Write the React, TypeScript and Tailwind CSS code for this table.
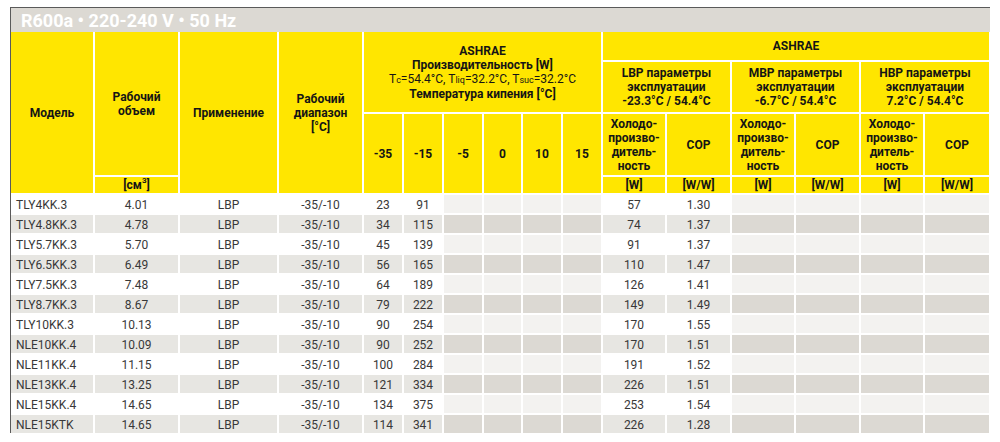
import React from 'react';

const rows = [
  ['TLY4KK.3', '4.01', '23', '91', '57', '1.30'],
  ['TLY4.8KK.3', '4.78', '34', '115', '74', '1.37'],
  ['TLY5.7KK.3', '5.70', '45', '139', '91', '1.37'],
  ['TLY6.5KK.3', '6.49', '56', '165', '110', '1.47'],
  ['TLY7.5KK.3', '7.48', '64', '189', '126', '1.41'],
  ['TLY8.7KK.3', '8.67', '79', '222', '149', '1.49'],
  ['TLY10KK.3', '10.13', '90', '254', '170', '1.55'],
  ['NLE10KK.4', '10.09', '90', '252', '170', '1.51'],
  ['NLE11KK.4', '11.15', '100', '284', '191', '1.52'],
  ['NLE13KK.4', '13.25', '121', '334', '226', '1.51'],
  ['NLE15KK.4', '14.65', '134', '375', '253', '1.54'],
  ['NLE15KTK', '14.65', '114', '341', '226', '1.28'],
];

const hd = 'bg-[#ffe600] flex items-center justify-center text-center font-bold text-[12px] leading-[14px] text-[#151515]';

function Holodo() {
  return (
    <div className={`${hd} leading-[13.5px]`}>
      Холодо-<br />произво-<br />дитель-<br />ность
    </div>
  );
}

export default function App() {
  return (
    <div className="w-[1000px] h-[442px] bg-white pt-[7px] pl-[10px]" style={{ fontFamily: 'Roboto, "Liberation Sans", sans-serif' }}>
      <div className="w-[980px] border-l border-t border-[#5a5a5a]">
        <div className="h-[24px] bg-[#dcd9d3] pl-[10px] pt-[2px] flex items-center text-white font-bold text-[18px] leading-none">
          R600a • 220-240 V • 50 Hz
        </div>
        <div className="grid gap-[2px] bg-white grid-cols-[82px_83px_97px_83px_38px_38px_38px_37px_38px_38px_62px_63px_62px_63px_62px_64px] grid-rows-[28px_50px_61px_16px_repeat(12,18px)]">
          <div className={`${hd} row-span-4`}>Модель</div>
          <div className={`${hd} row-span-3`}>Рабочий<br />объем</div>
          <div className={`${hd} row-span-4`}>Применение</div>
          <div className={`${hd} row-span-4 leading-[13.5px]`}>Рабочий<br />диапазон<br />[°C]</div>
          <div className={`${hd} col-span-6 row-span-2 flex-col`}>
            <div>ASHRAE</div>
            <div>Производительность [W]</div>
            <div className="font-normal">
              T<span className="text-[9px]">c</span>=54.4°C, T<span className="text-[9px]">liq</span>=32.2°C, T<span className="text-[9px]">suc</span>=32.2°C
            </div>
            <div>Температура кипения [°C]</div>
          </div>
          <div className={`${hd} col-span-6`}>ASHRAE</div>
          <div className={`${hd} col-span-2`}>LBP параметры<br />эксплуатации<br />-23.3°C / 54.4°C</div>
          <div className={`${hd} col-span-2`}>MBP параметры<br />эксплуатации<br />-6.7°C / 54.4°C</div>
          <div className={`${hd} col-span-2`}>HBP параметры<br />эксплуатации<br />7.2°C / 54.4°C</div>
          {['-35', '-15', '-5', '0', '10', '15'].map((t) => (
            <div key={t} className={`${hd} row-span-2`}>{t}</div>
          ))}
          <Holodo />
          <div className={hd}>COP</div>
          <Holodo />
          <div className={hd}>COP</div>
          <Holodo />
          <div className={hd}>COP</div>
          <div className={hd}>[см<sup className="text-[8px]">3</sup>]</div>
          {['[W]', '[W/W]', '[W]', '[W/W]', '[W]', '[W/W]'].map((u, i) => (
            <div key={i} className={hd}>{u}</div>
          ))}
          {rows.map((r, i) => {
            const odd = i % 2 === 1;
            const cell = `${odd ? 'bg-[#e7e6e2]' : 'bg-white'} flex items-center pt-[2px] text-[12px] text-[#383838] leading-none`;
            const empty = odd ? 'bg-[#dcd9d3]' : 'bg-[#f3f2f0]';
            return (
              <React.Fragment key={r[0]}>
                <div className={`${cell} pl-[5px]`}>{r[0]}</div>
                <div className={`${cell} justify-center`}>{r[1]}</div>
                <div className={`${cell} justify-center`}>LBP</div>
                <div className={`${cell} justify-center`}>-35/-10</div>
                <div className={`${cell} justify-center`}>{r[2]}</div>
                <div className={`${cell} justify-center`}>{r[3]}</div>
                <div className={empty} />
                <div className={empty} />
                <div className={empty} />
                <div className={empty} />
                <div className={`${cell} justify-center`}>{r[4]}</div>
                <div className={`${cell} justify-center`}>{r[5]}</div>
                <div className={empty} />
                <div className={empty} />
                <div className={empty} />
                <div className={empty} />
              </React.Fragment>
            );
          })}
        </div>
      </div>
    </div>
  );
}
